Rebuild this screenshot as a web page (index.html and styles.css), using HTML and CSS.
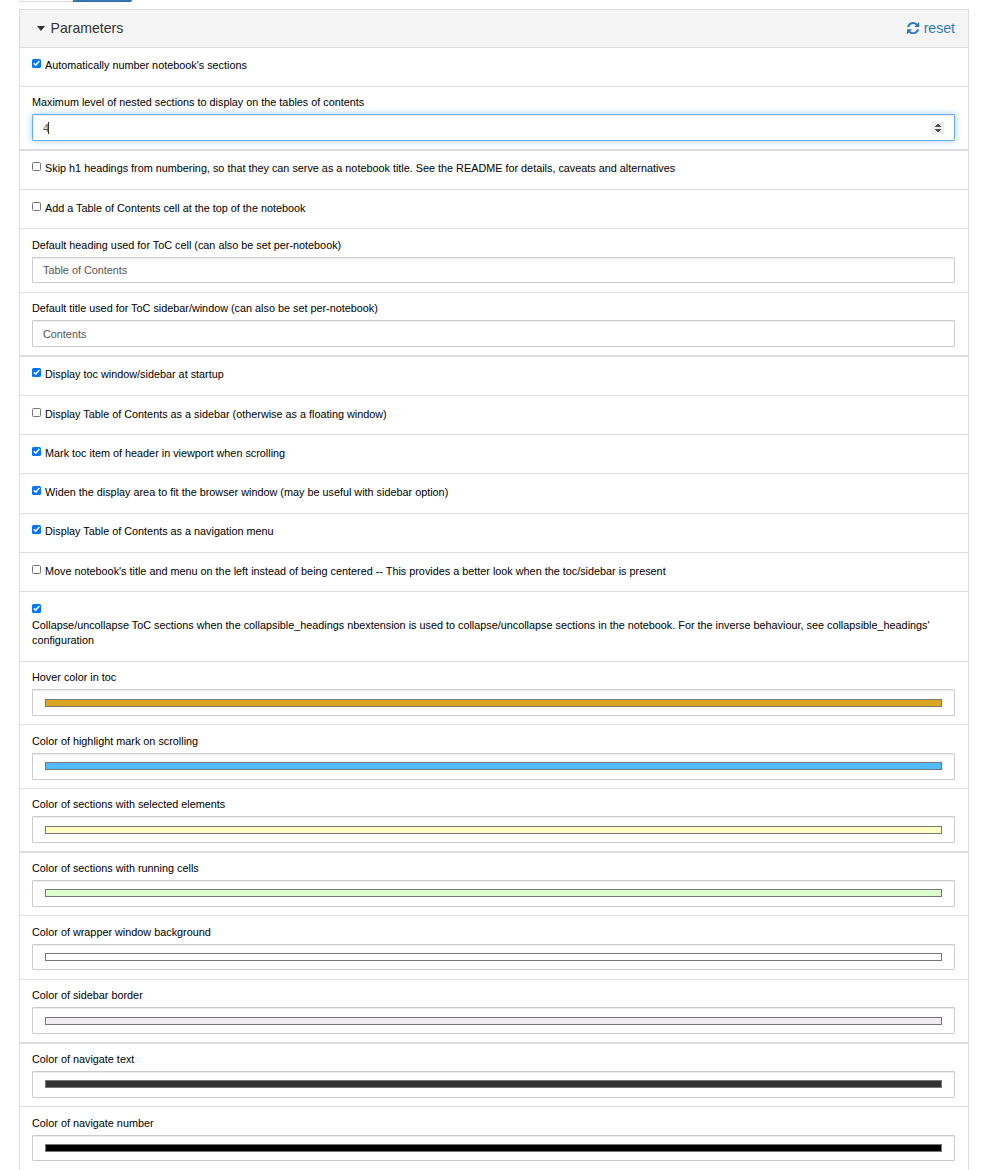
FILE: index.html
```html
<!DOCTYPE html>
<html lang="en">
<head>
<meta charset="utf-8">
<title>Parameters</title>
<link rel="stylesheet" href="styles.css">
</head>
<body>
<div class="tabs"><span class="tab"></span><span class="tab tab-active"></span></div>
<section class="panel">
  <header class="heading">
    <div class="title"><span class="caret"></span>Parameters</div>
    <a class="reset"><svg class="refresh" viewBox="0 0 1536 1536"><path fill="currentColor" d="M1511 928q0 5-1 7-64 268-268 434.500T764 1536q-146 0-282.500-55T238 1324l-129 129q-19 19-45 19t-45-19-19-45V960q0-26 19-45t45-19h448q26 0 45 19t19 45-19 45l-137 137q71 66 161 102t187 36q134 0 250-65t186-179q11-17 53-117 8-23 30-23h192q13 0 22.500 9.500t9.500 22.500zm25-800v448q0 26-19 45t-45 19h-448q-26 0-45-19t-19-45 19-45l138-138Q969 256 768 256q-134 0-250 65T332 500q-11 17-53 117-8 23-30 23H50q-13 0-22.500-9.500T18 608v-7q65-268 270-434.500T768 0q146 0 284 55.500T1297 212l130-129q19-19 45-19t45 19 19 45z"/></svg>reset</a>
  </header>
  <div class="rows">
    <label class="row check early"><input type="checkbox" checked><span>Automatically number notebook's sections</span></label>
    <div class="row"><div class="label">Maximum level of nested sections to display on the tables of contents</div>
      <div class="field focused lowered"><span class="value">4<span class="cursor"></span></span><svg class="spinner" viewBox="0 0 12 12"><path fill="#efefef" d="M0 0h12v12H0z"/><path fill="#505050" d="M3 5V4h1V3h1V2h2v1h1v1h1v1zM3 7h6v1H8v1H7v1H5V9H4V8H3z"/></svg></div></div>
    <label class="row check thick"><input type="checkbox"><span>Skip h1 headings from numbering, so that they can serve as a notebook title. See the README for details, caveats and alternatives</span></label>
    <label class="row check"><input type="checkbox"><span>Add a Table of Contents cell at the top of the notebook</span></label>
    <div class="row late"><div class="label">Default heading used for ToC cell (can also be set per-notebook)</div><div class="field short">Table of Contents</div></div>
    <div class="row"><div class="label">Default title used for ToC sidebar/window (can also be set per-notebook)</div><div class="field lowered">Contents</div></div>
    <label class="row check thick"><input type="checkbox" checked><span>Display toc window/sidebar at startup</span></label>
    <label class="row check"><input type="checkbox"><span>Display Table of Contents as a sidebar (otherwise as a floating window)</span></label>
    <label class="row check"><input type="checkbox" checked><span>Mark toc item of header in viewport when scrolling</span></label>
    <label class="row check"><input type="checkbox" checked><span>Widen the display area to fit the browser window (may be useful with sidebar option)</span></label>
    <label class="row check early"><input type="checkbox" checked><span>Display Table of Contents as a navigation menu</span></label>
    <label class="row check"><input type="checkbox"><span>Move notebook's title and menu on the left instead of being centered -- This provides a better look when the toc/sidebar is present</span></label>
    <label class="row check stacked"><input type="checkbox" checked><span>Collapse/uncollapse ToC sections when the collapsible_headings nbextension is used to collapse/uncollapse sections in the notebook. For the inverse behaviour, see collapsible_headings' configuration</span></label>
    <div class="row"><div class="label">Hover color in toc</div><div class="field color low"><span class="swatch goldenrod"></span></div></div>
    <div class="row late"><div class="label">Color of highlight mark on scrolling</div><div class="field color"><span class="swatch sky"></span></div></div>
    <div class="row"><div class="label">Color of sections with selected elements</div><div class="field color low"><span class="swatch cream"></span></div></div>
    <div class="row late thick"><div class="label">Color of sections with running cells</div><div class="field color"><span class="swatch mint"></span></div></div>
    <div class="row late"><div class="label">Color of wrapper window background</div><div class="field color short"><span class="swatch white"></span></div></div>
    <div class="row"><div class="label">Color of sidebar border</div><div class="field color low"><span class="swatch silver"></span></div></div>
    <div class="row late thick"><div class="label">Color of navigate text</div><div class="field color"><span class="swatch charcoal"></span></div></div>
    <div class="row late"><div class="label">Color of navigate number</div><div class="field color short"><span class="swatch black"></span></div></div>
  </div>
</section>
</body>
</html>
```
FILE: styles.css
```css
* { box-sizing: border-box; }
body {
  margin: 0;
  height: 1170px;
  overflow: hidden;
  background: #fff;
  color: #000;
  font: 10.845px/15px "Liberation Sans", Arial, sans-serif;
}
.tabs { display: flex; height: 9px; padding-left: 19px; }
.tab {
  width: 54px;
  height: 2px;
  border: solid #ddd;
  border-width: 0 0 1px 1px;
  border-radius: 0 0 0 2px;
}
.tab-active {
  width: 59px;
  background: #337ab7;
  border-color: #2e6da4;
  border-radius: 0 0 2px 0;
}
.panel {
  width: 950px;
  margin-left: 19px;
  border: 1px solid #ddd;
  border-bottom: 0;
  border-radius: 1px 1px 0 0;
}
.heading {
  display: flex;
  justify-content: space-between;
  align-items: center;
  height: 37px;
  padding: 0 13px 0 17px;
  background: #f5f5f5;
  color: #333;
  font-size: 14.1px;
}
.title, .reset { display: flex; align-items: center; }
.caret {
  margin-right: 5.5px;
  border: solid transparent;
  border-width: 5px 4.5px 0;
  border-top-color: #333;
}
.reset { color: #337ab7; }
.refresh { width: 12.3px; height: 12.3px; margin: 0 4px 1px 0; }
.rows {
  display: grid;
  grid-template-rows: 39px 63px 40px 39px 64px 63px 40px 39px 39px 40px 39px 39px 70px 63px 64px 63px 64px 64px 63px 64px 64px;
}
.row {
  min-width: 0;
  padding: 8px 13px 0 12px;
  border-top: 1px solid #ddd;
}
.late { padding-top: 9px; }
.thick { border-top-width: 2px; }
.late.thick { padding-top: 8px; }
.label { height: 19px; white-space: nowrap; }
.check {
  display: flex;
  align-items: flex-start;
  gap: 4px;
  padding-top: 12px;
}
.check.early, .check.thick { padding-top: 11px; }
.check input {
  appearance: none;
  display: flex;
  flex: none;
  width: 9px;
  height: 9px;
  margin: 0;
  border: 1px solid #767676;
  border-radius: 1.5px;
  background: #fff;
}
.check input:checked { border: 0; background: #0075ff; }
.check input:checked::before {
  content: "";
  width: 9px;
  height: 9px;
  background: #fff;
  clip-path: polygon(1.3px 4.9px, 2.4px 3.8px, 3.7px 5.1px, 6.8px 1.5px, 7.9px 2.5px, 3.8px 7.3px);
}
.check span { margin-top: -1px; white-space: nowrap; }
.check.stacked { flex-direction: column; gap: 5px; }
.check.stacked span { margin-top: 0; white-space: normal; }
.field {
  display: flex;
  align-items: center;
  justify-content: space-between;
  height: 27px;
  padding: 0 10px;
  background: #fff;
  border: 1px solid #ccc;
  border-radius: 1px;
  box-shadow: inset 0 1px 1px rgba(0, 0, 0, .075);
  color: #555;
}
.short { height: 26px; }
.lowered { padding-top: 1px; }
.focused {
  border-color: #66afe9;
  box-shadow: inset 0 1px 1px rgba(0, 0, 0, .075), 0 0 7px rgba(102, 175, 233, .6);
}
.value { display: flex; align-items: center; }
.cursor { width: 1px; height: 12px; margin-left: -1px; background: #333; }
.spinner { width: 12px; height: 12px; }
.color { align-items: flex-start; padding: 8px 12px 0; }
.color.low { padding-top: 9px; }
.swatch { width: 100%; height: 8px; border: 1px solid #777; }
.goldenrod { background: #daa520; }
.sky { background: #52bbff; }
.cream { background: #fffec4; }
.mint { background: #dbffcd; }
.white { background: #fff; }
.silver { background: #eeecee; }
.charcoal { background: #333; }
.black { background: #000; }
```
